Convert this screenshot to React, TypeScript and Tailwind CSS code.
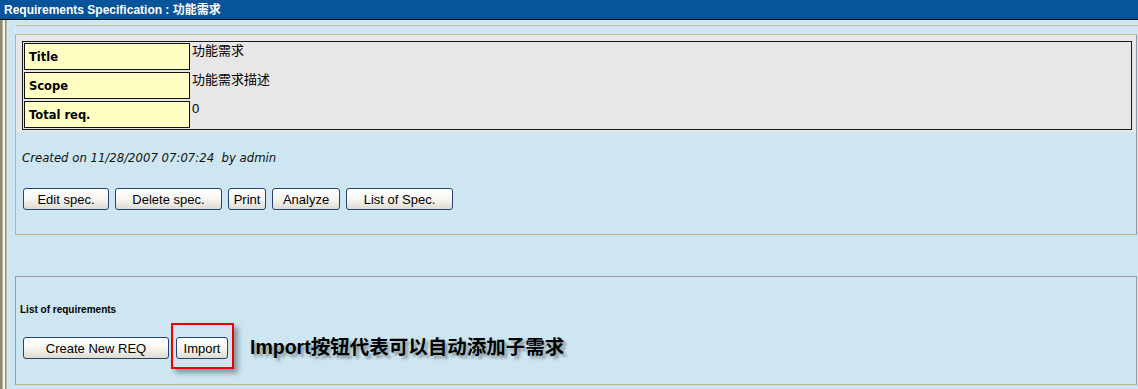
import React from "react";

const btn =
  "h-[22px] rounded-[3px] border border-[#25446f] bg-gradient-to-b from-white via-[#f7f6f2] to-[#dedbd0] text-[13px] leading-none text-black flex items-center justify-center font-['Liberation_Sans',sans-serif]";

function Row({ label, value }: { label: string; value: string }) {
  return (
    <div className="flex h-[27px]">
      <div className="w-[166px] h-full border border-[#111] bg-[#ffffc4] flex items-center pl-[4px] pt-[2px] font-['DejaVu_Sans',sans-serif] font-bold text-[11.5px] text-black">
        {label}
      </div>
      <div className="pl-[2px] pt-[0px] text-[13px] leading-[16px] text-black font-['Liberation_Sans','Noto_Sans_CJK_SC',sans-serif]">
        {value}
      </div>
    </div>
  );
}

export default function App() {
  return (
    <div className="w-[1138px] h-[389px] bg-[#cde6f1] overflow-hidden">
      <div className="h-[20px] bg-[#08549a] border-b border-black flex items-center pl-[4px] text-white font-bold text-[12px] font-['Liberation_Sans','Noto_Sans_CJK_SC',sans-serif]">
        Requirements Specification : 功能需求
      </div>
      <div className="flex h-[369px]">
        <div className="flex h-full">
          <div className="w-[2px] h-full bg-[#8c8c6a]" />
          <div className="w-[1px] h-full bg-[#b4b4a4]" />
          <div className="w-[2px] h-full bg-[#f4f4f0]" />
          <div className="w-[1px] h-full bg-[#909090]" />
          <div className="w-[1px] h-full bg-[#bdbc98]" />
        </div>
        <div className="flex-1 pl-[8px] pt-[5px]">
          <div className="border-t border-[#c4bc94] h-[9px] border-l border-l-[#e8ecec]" />
          {/* Panel 1 */}
          <div className="h-[201px] border-t border-l border-b border-r border-t-[#c4bc94] border-l-[#b4b4a0] border-b-[#bdb48a] border-r-[#9a9a9a] mr-[1px]">
            <div className="h-[97px] bg-[#e7e7e7] pt-[6px] pl-[6px] pr-[4px]">
              <div className="h-[89px] border border-[#1a1a1a] pt-[1px] pl-[1px] flex flex-col gap-[2px]">
                <Row label="Title" value="功能需求" />
                <Row label="Scope" value="功能需求描述" />
                <Row label="Total req." value="0" />
              </div>
            </div>
            <div className="mt-[19px] pl-[6px] h-[16px] flex items-center italic text-[11.7px] text-[#111] font-['DejaVu_Sans',sans-serif] whitespace-pre">
              {"Created on 11/28/2007 07:07:24  by admin"}
            </div>
            <div className="mt-[21px] pl-[7px] flex gap-[6px]">
              <button className={`${btn} w-[86px]`}>Edit spec.</button>
              <button className={`${btn} w-[107px]`}>Delete spec.</button>
              <button className={`${btn} w-[38px]`}>Print</button>
              <button className={`${btn} w-[68px]`}>Analyze</button>
              <button className={`${btn} w-[107px]`}>List of Spec.</button>
            </div>
          </div>
          <div className="h-[41px]" />
          {/* Panel 2 */}
          <div className="h-[109px] border border-[#9c9c9c] border-b-[#bdb48a] mr-[1px]">
            <div className="mt-[25px] pl-[4px] h-[14px] flex items-center font-bold text-[10px] text-black font-['Liberation_Sans',sans-serif]">
              List of requirements
            </div>
            <div className="mt-[21px] pl-[7px] flex items-center">
              <button className={`${btn} w-[146px]`}>Create New REQ</button>
              <div className="relative ml-[7px]">
                <div className="absolute left-[-5px] top-[-14px] w-[63px] h-[46px] border-2 border-[#ee0000] shadow-[4px_4px_5px_rgba(0,0,0,0.35)]" />
                <button className={`${btn} w-[52px] relative`}>Import</button>
              </div>
              <div className="ml-[22px] text-[19.5px] font-bold text-black leading-none [text-shadow:3px_3px_3px_rgba(0,0,0,0.35)] font-['Liberation_Sans','Noto_Sans_CJK_SC',sans-serif]">
                Import按钮代表可以自动添加子需求
              </div>
            </div>
          </div>
        </div>
      </div>
    </div>
  );
}
